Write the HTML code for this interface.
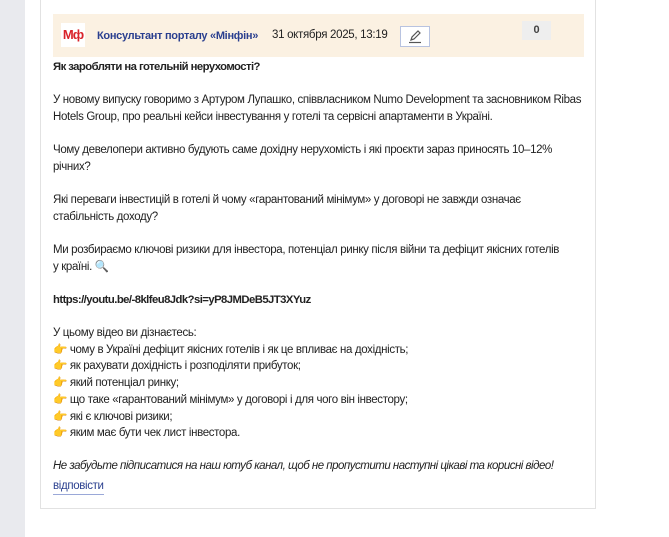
<!DOCTYPE html>
<html><head><meta charset="utf-8"><style>
body{margin:0;width:669px;height:537px;background:#fff;font-family:"Liberation Sans",sans-serif;font-size:11.5px;color:#222;position:relative;overflow:hidden}
.strip{position:absolute;left:0;top:0;width:25px;height:537px;background:#e9eaee}
.card{position:absolute;left:40px;top:-2px;width:554px;height:510px;border:1px solid #e2e2e2;border-top:none}
.hdr{position:absolute;left:53px;top:14px;width:531px;height:43px;background:#fbf1e2}
.logo{position:absolute;left:8px;top:9px;width:24px;height:24px;background:#fff;color:#d9232a;font-weight:bold;font-size:13px;line-height:24px;text-align:center;letter-spacing:-1px}
.name{position:absolute;left:44px;top:16px;color:#2a3f8f;font-weight:bold;font-size:11px;letter-spacing:-0.3px}
.date{position:absolute;left:219px;top:15px;font-size:11.5px;letter-spacing:-0.3px}
.edit{position:absolute;left:347px;top:12px;width:28px;height:19px;border:1px solid #b8c3e0;background:#fff}
.cnt{position:absolute;left:469px;top:7px;width:29px;height:19px;background:#eeeeee;text-align:center;line-height:19px;font-weight:bold;font-size:11px;color:#444}
.body{position:absolute;left:53px;top:59px;width:540px;line-height:16.7px;letter-spacing:-0.35px}
p{margin:0 0 16.5px}
b{letter-spacing:-0.55px;font-size:11.3px}
.f{color:#d8a000}
a{color:#2a3f8f;text-decoration:none;border-bottom:1px solid #9aa8d8;padding-bottom:2px}
</style></head><body>
<div class="strip"></div>
<div class="card"></div>
<div class="hdr">
<div class="logo">Мф</div>
<div class="name">Консультант порталу «Мінфін»</div>
<div class="date">31 октября 2025, 13:19</div>
<div class="edit"><svg width="28" height="19" viewBox="0 0 28 19"><path d="M10 13 L11 10 L17 4 L19 6 L13 12 Z" fill="none" stroke="#555" stroke-width="1.2"/><path d="M8 15.5 H20" stroke="#555" stroke-width="1.2"/></svg></div>
<div class="cnt">0</div>
</div>
<div class="body">
<p><b>Як заробляти на готельній нерухомості?</b></p>
<p>У новому випуску говоримо з Артуром Лупашко, співвласником Numo Development та засновником Ribas Hotels Group, про реальні кейси інвестування у готелі та сервісні апартаменти в Україні.</p>
<p>Чому девелопери активно будують саме дохідну нерухомість і які проєкти зараз приносять 10–12%<br>річних?</p>
<p>Які переваги інвестицій в готелі й чому «гарантований мінімум» у договорі не завжди означає<br>стабільність доходу?</p>
<p>Ми розбираємо ключові ризики для інвестора, потенціал ринку після війни та дефіцит якісних готелів<br>у країні. 🔍</p>
<p><b>https://youtu.be/-8klfeu8Jdk?si=yP8JMDeB5JT3XYuz</b></p>
<p>У цьому відео ви дізнаєтесь:<br>
<span class="f">👉</span> чому в Україні дефіцит якісних готелів і як це впливає на дохідність;<br>
<span class="f">👉</span> як рахувати дохідність і розподіляти прибуток;<br>
<span class="f">👉</span> який потенціал ринку;<br>
<span class="f">👉</span> що таке «гарантований мінімум» у договорі і для чого він інвестору;<br>
<span class="f">👉</span> які є ключові ризики;<br>
<span class="f">👉</span> яким має бути чек лист інвестора.</p>
<p style="margin-bottom:3px;white-space:nowrap"><i style="letter-spacing:-0.5px">Не забудьте підписатися на наш ютуб канал, щоб не пропустити наступні цікаві та корисні відео!</i></p>
<a>відповісти</a>
</div>
</body></html>
